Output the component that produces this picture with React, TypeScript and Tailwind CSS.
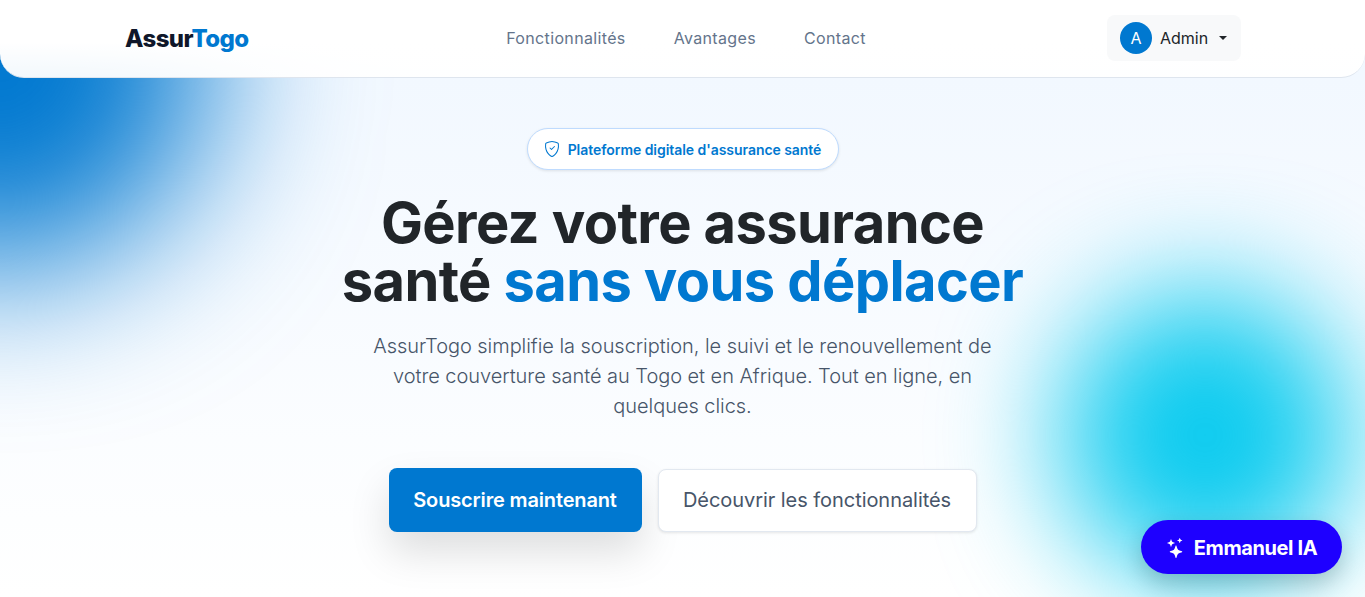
import { BsShieldCheck, BsStars } from "react-icons/bs";

export default function App() {
  return (
    <div className="relative h-[597px] w-full overflow-hidden bg-gradient-to-b from-[#f0f7ff] to-white font-['Inter',sans-serif]">
      <div className="absolute left-[-210px] top-[-150px] h-[420px] w-[420px] rounded-full bg-[#0078d0] blur-[80px]" />
      <div className="absolute left-[1060px] top-[290px] h-[290px] w-[290px] rounded-full bg-[#0ccbef] blur-[60px]" />

      <header className="relative z-10 flex h-[78px] items-center justify-between rounded-b-[24px] border-b border-[#dee5ee] bg-gradient-to-b from-white from-55% to-white/95 pb-[2px] pl-[125px] pr-[124px]">
        <div className="mt-[2px] w-[140px] text-[24px] font-extrabold leading-none tracking-[-0.6px] text-[#0f172a]">
          Assur<span className="text-[#0078d0]">Togo</span>
        </div>
        <nav className="flex items-center gap-[48px] text-[16px] font-normal tracking-[0.35px] text-[#64748b]">
          <span>Fonctionnalités</span>
          <span>Avantages</span>
          <span>Contact</span>
        </nav>
        <div className="flex h-[46px] w-[134px] items-center rounded-[8px] bg-[#f8f9fa] pl-[13px]">
          <span className="flex h-[32px] w-[32px] items-center justify-center rounded-full bg-[#0078d0] text-[16px] text-white">A</span>
          <span className="ml-[8px] text-[16px] text-[#212529]">Admin</span>
          <span className="ml-[11px] h-0 w-0 border-x-[4px] border-t-[4px] border-x-transparent border-t-[#212529]" />
        </div>
      </header>

      <main className="relative z-10 flex flex-col items-center">
        <div className="mt-[50px] flex h-[42px] w-[312px] items-center justify-center gap-[8px] rounded-full border border-[#bfdbfe] bg-white text-[14px] font-semibold tracking-[-0.05px] text-[#0078d0] shadow-[0_1px_3px_rgba(0,0,0,0.1)]">
          <BsShieldCheck className="h-[16px] w-[16px]" />
          <span>Plateforme digitale d'assurance santé</span>
        </div>
        <h1 className="mt-[24px] text-center text-[56px] font-bold leading-[58px] tracking-[-0.6px] text-[#212529]">
          Gérez votre assurance
          <br />
          santé <span className="text-[#0078d0]">sans vous déplacer</span>
        </h1>
        <p className="mt-[21px] w-[640px] text-center text-[20px] font-light leading-[30px] tracking-[-0.05px] text-[#475569]">
          AssurTogo simplifie la souscription, le suivi et le renouvellement de votre couverture santé au Togo et en Afrique. Tout en ligne, en quelques clics.
        </p>
        <div className="mt-[47px] flex items-center gap-[16px]">
          <button className="h-[64px] w-[253px] rounded-[8px] bg-[#0078d0] text-[20px] font-semibold tracking-[-0.15px] text-white shadow-[0_20px_40px_rgba(0,0,0,0.13)]">
            Souscrire maintenant
          </button>
          <button className="h-[63px] w-[319px] rounded-[8px] border border-[#e2e8f0] bg-white text-[20px] font-normal tracking-[-0.05px] text-[#475569] shadow-[0_1px_3px_rgba(0,0,0,0.1)]">
            Découvrir les fonctionnalités
          </button>
        </div>
      </main>

      <button className="absolute left-[1141px] top-[520px] z-20 flex h-[54px] w-[201px] items-center justify-center gap-[8px] rounded-full bg-[#1e00ff] pt-[2px] text-[20px] font-bold tracking-[-0.4px] text-white shadow-[0_10px_25px_rgba(0,0,0,0.2)]">
        <BsStars className="h-[20px] w-[20px]" />
        Emmanuel IA
      </button>
    </div>
  );
}
